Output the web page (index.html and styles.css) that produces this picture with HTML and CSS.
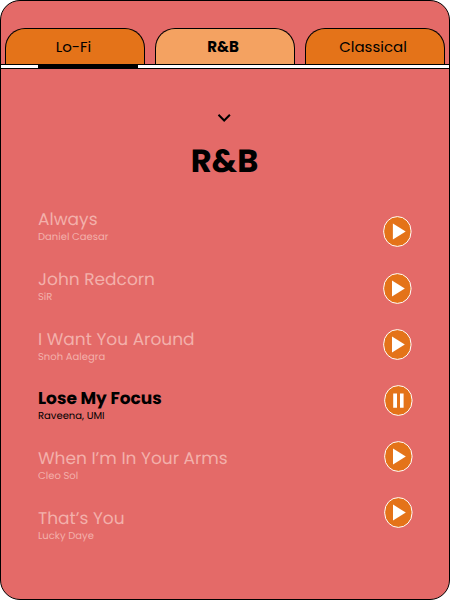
FILE: index.html
```html
<!DOCTYPE html>
<html lang="en">
<head>
<meta charset="utf-8">
<title>R&amp;B</title>
<link rel="stylesheet" href="styles.css">
</head>
<body>
<svg class="defs" width="0" height="0">
  <symbol id="play" viewBox="0 0 29 31"><rect class="disc" x=".7" y=".6" width="27.3" height="29.8" rx="13.65" ry="14.2"/><path class="glyph" d="M9 7.6v16L21.8 15.6z"/></symbol>
  <symbol id="play-first" viewBox="0 0 29 31"><rect class="disc" x=".7" y=".6" width="27.3" height="29.8" rx="13.65" ry="14.2"/><path class="glyph" d="M9.9 7.6v16L22.7 15.6z"/></symbol>
  <symbol id="pause" viewBox="0 0 29 31"><rect class="disc" x=".7" y=".6" width="27.3" height="29.8" rx="13.65" ry="14.2"/><path class="glyph" d="M9.2 8.5h3.8v14.3H9.2zM16 8.5h3.6v14.3H16z"/></symbol>
</svg>
<main class="app">
  <nav class="tabs">
    <button class="tab"><span>Lo-Fi</span></button>
    <button class="tab active"><span>R&amp;B</span></button>
    <button class="tab"><span>Classical</span></button>
  </nav>
  <div class="track"><div class="thumb"></div></div>
  <svg class="chevron" viewBox="0 0 14 10"><path d="M1.3 1.7 7 7.5l5.7-5.8"/></svg>
  <h1>R&amp;B</h1>
  <div class="playlist">
    <ul class="songs">
      <li><h2>Always</h2><p>Daniel Caesar</p></li>
      <li><h2>John Redcorn</h2><p>SiR</p></li>
      <li><h2>I Want You Around</h2><p>Snoh Aalegra</p></li>
      <li class="current"><h2>Lose My Focus</h2><p>Raveena, UMI</p></li>
      <li><h2>When I’m In Your Arms</h2><p>Cleo Sol</p></li>
      <li><h2>That’s You</h2><p>Lucky Daye</p></li>
    </ul>
    <div class="controls">
      <svg class="first"><use href="#play-first"/></svg>
      <svg><use href="#play"/></svg>
      <svg><use href="#play"/></svg>
      <svg class="shift"><use href="#pause"/></svg>
      <svg class="shift"><use href="#play"/></svg>
      <svg class="shift"><use href="#play"/></svg>
    </div>
  </div>
</main>
</body>
</html>
```
FILE: styles.css
```css
* { box-sizing: border-box; margin: 0; padding: 0; }
body { background: #fff; font-family: Poppins, Inter, sans-serif; color: #000; text-rendering: geometricPrecision; }
.defs { display: block; }
.app { width: 450px; height: 600px; border: 1px solid #000; border-radius: 20px; background: #e46a68; overflow: hidden; }
.tabs { display: flex; gap: 10px; padding: 27px 4px 0; }
.tab { width: 140px; height: 36px; padding-right: 4px; border: 1px solid #000; border-bottom: 0; border-radius: 20px 20px 0 0; background: #e47319; font: inherit; font-size: 15px; line-height: 36px; color: #000; }
.tab:first-child { padding-right: 3px; }
.tab.active { background: #f4a261; font-weight: 700; }
.track { height: 5px; border: 1px solid #000; border-width: 1px 0; background: #fff; padding-left: 37px; }
.thumb { width: 100px; height: 3px; background: #000; }
.chevron { display: block; width: 14px; height: 10px; margin: 44px auto 0 216px; fill: none; stroke: #000; stroke-width: 2; transform: translateX(.2px); }
h1 { margin: 19px 0 -1px -1px; text-align: center; font-size: 32px; line-height: 40px; font-weight: 700; }
.playlist { display: flex; justify-content: space-between; padding: 0 37px 0 37px; }
.songs { list-style: none; padding-top: 28px; }
.songs li { height: 60px; color: #f3b0ab; white-space: nowrap; }
.songs li:nth-child(3) { height: 59px; }
h2 { font-size: 17px; line-height: 20px; font-weight: 400; }
.songs p { font-size: 10px; line-height: 16px; }
.songs .current { color: #000; }
.current h2 { font-weight: 700; }
.controls { display: flex; flex-direction: column; gap: 25px; padding-top: 35px; }
.controls svg { display: block; width: 29px; height: 31px; }
.controls .first { margin-bottom: 1px; }
.controls .shift { margin-left: 1px; margin-right: -1px; }
.disc { fill: #e47319; stroke: #fff; stroke-width: 1; }
.glyph { fill: #fff; }
```
